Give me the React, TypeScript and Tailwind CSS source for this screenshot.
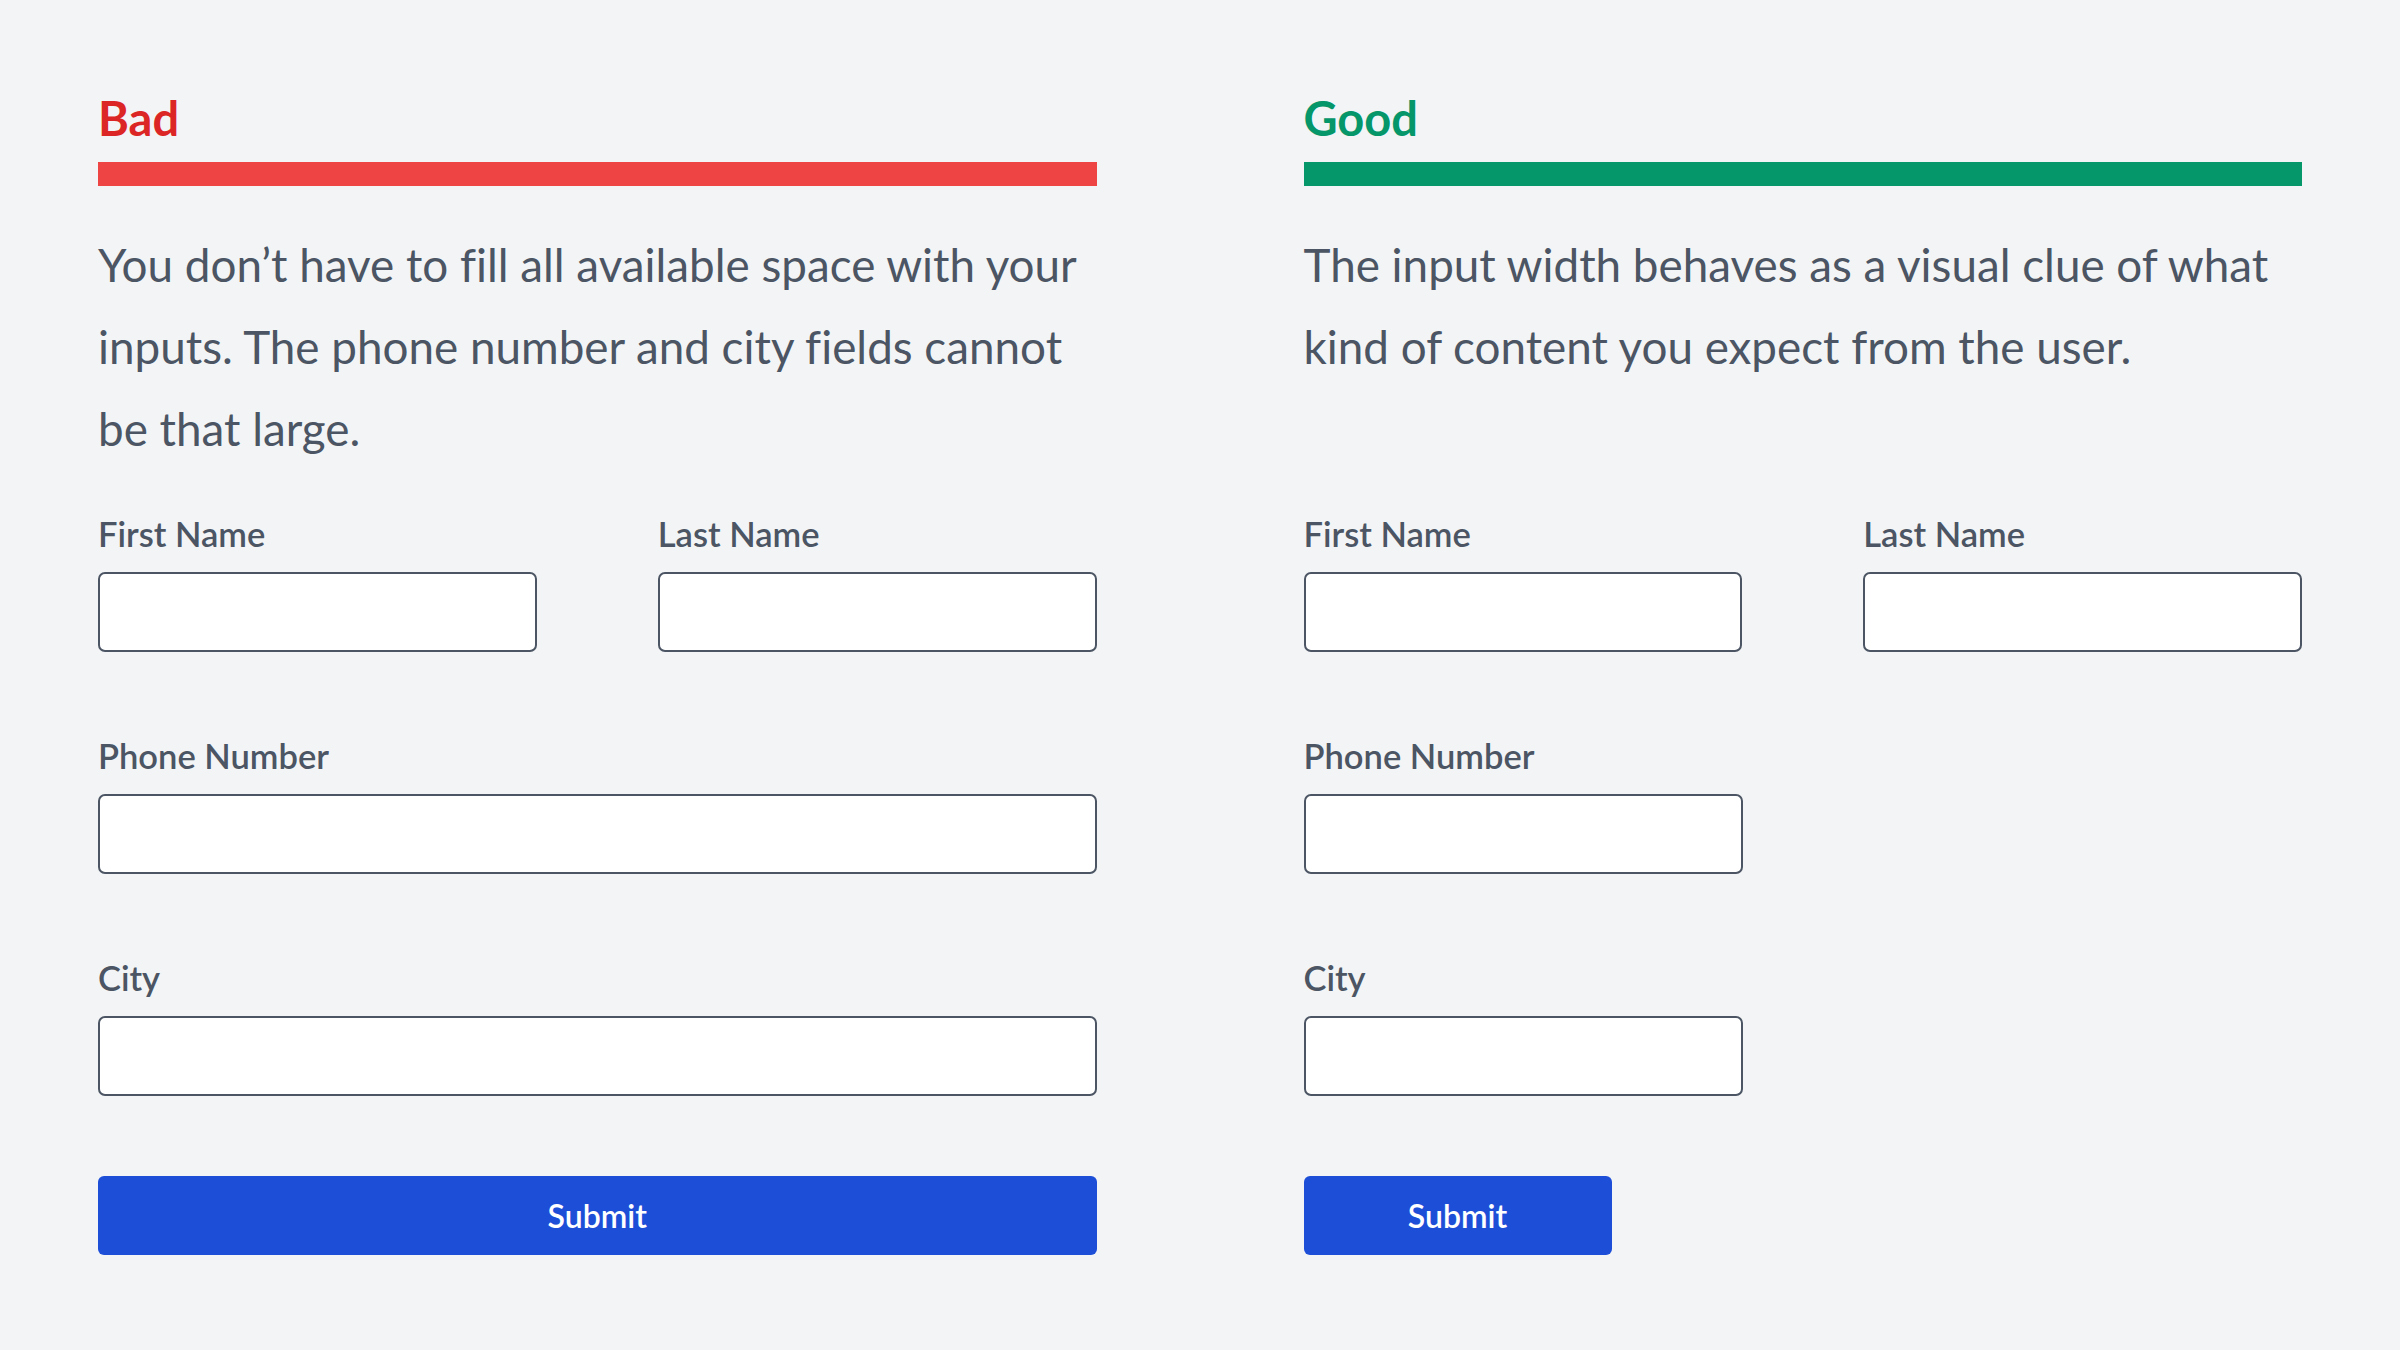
import React from 'react'

type FieldProps = {
  label: string
  className?: string
}

function Field({ label, className = '' }: FieldProps) {
  return (
    <div className={`flex flex-col gap-[18px] ${className}`}>
      <label className="text-[34.5px] leading-[40px] font-semibold text-[#4b5563]">{label}</label>
      <input
        type="text"
        className="h-[80px] w-full rounded-[7px] border-2 border-[#4b5563] bg-white px-4 outline-none"
      />
    </div>
  )
}

type ColumnProps = {
  title: string
  titleColor: string
  barColor: string
  text: string
  compact?: boolean
}

function Column({ title, titleColor, barColor, text, compact = false }: ColumnProps) {
  return (
    <section className="flex flex-col">
      <h2 className={`text-[47px] leading-none font-bold ${titleColor}`}>{title}</h2>
      <div className={`mt-[20px] h-[24px] w-full ${barColor}`} />
      <p className="mt-[38px] h-[246px] text-[45.8px] leading-[82px] text-[#4b5563] [font-variant-ligatures:none]">
        {text}
      </p>

      <form className="mt-[44px] flex flex-col gap-[84px]">
        <div className="grid grid-cols-2 gap-x-[121px]">
          <Field label="First Name" />
          <Field label="Last Name" />
        </div>
        <Field label="Phone Number" className={compact ? 'w-[439px]' : ''} />
        <Field label="City" className={compact ? 'w-[439px]' : ''} />
        <button
          type="button"
          className={`-mt-[4px] h-[79px] rounded-[6px] bg-[#1d4ed8] text-[32px] font-semibold text-white ${
            compact ? 'w-[308px]' : 'w-full'
          }`}
        >
          Submit
        </button>
      </form>
    </section>
  )
}

export default function App() {
  return (
    <div
      className="min-h-screen bg-[#f3f4f6] px-[98px] pt-[95px]"
      style={{ fontFamily: 'Lato, "Noto Sans", sans-serif' }}
    >
      <div className="grid grid-cols-2 gap-x-[207px]">
        <Column
          title="Bad"
          titleColor="text-[#dc2626]"
          barColor="bg-[#ef4444]"
          text="You don’t have to fill all available space with your inputs. The phone number and city fields cannot be that large."
        />
        <Column
          title="Good"
          titleColor="text-[#059669]"
          barColor="bg-[#059669]"
          text="The input width behaves as a visual clue of what kind of content you expect from the user."
          compact
        />
      </div>
    </div>
  )
}
